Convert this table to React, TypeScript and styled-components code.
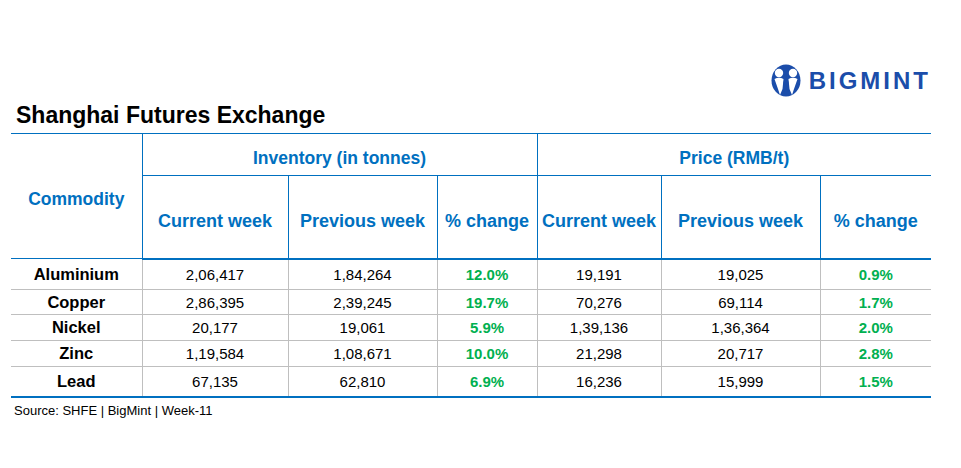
import { FC } from 'react';
import styled, { createGlobalStyle } from 'styled-components';

const BLUE = '#0070C0';
const GREEN = '#00B050';
const GREY = '#BFBFBF';

interface RowData {
  name: string;
  invCur: string;
  invPrev: string;
  invChg: string;
  priceCur: string;
  pricePrev: string;
  priceChg: string;
  h: number;
}

const rows: RowData[] = [
  { name: 'Aluminium', invCur: '2,06,417', invPrev: '1,84,264', invChg: '12.0%', priceCur: '19,191', pricePrev: '19,025', priceChg: '0.9%', h: 31 },
  { name: 'Copper', invCur: '2,86,395', invPrev: '2,39,245', invChg: '19.7%', priceCur: '70,276', pricePrev: '69,114', priceChg: '1.7%', h: 25 },
  { name: 'Nickel', invCur: '20,177', invPrev: '19,061', invChg: '5.9%', priceCur: '1,39,136', pricePrev: '1,36,364', priceChg: '2.0%', h: 26 },
  { name: 'Zinc', invCur: '1,19,584', invPrev: '1,08,671', invChg: '10.0%', priceCur: '21,298', pricePrev: '20,717', priceChg: '2.8%', h: 26 },
  { name: 'Lead', invCur: '67,135', invPrev: '62,810', invChg: '6.9%', priceCur: '16,236', pricePrev: '15,999', priceChg: '1.5%', h: 30 },
];

const colWidths = [131, 146, 149, 100, 124, 159, 111];

const BigmintLogo: FC = () => (
  <LogoWrap>
    <svg width="30" height="33" viewBox="0 0 30 33">
      <ellipse cx="15" cy="16.5" rx="14.5" ry="16" fill="#1B4DAA" />
      <circle cx="8" cy="9" r="4.2" fill="#fff" />
      <circle cx="22" cy="9" r="4.2" fill="#fff" />
      <path d="M3.5 15 Q8 12.5 12.5 15 L11.5 25 L9 31 L7 25 Z" fill="#fff" />
      <path d="M17.5 15 Q22 12.5 26.5 15 L23 25 L21 31 L18.5 25 Z" fill="#fff" />
      <path d="M12.5 17 L15 22 L17.5 17 L17 28 L15 24 L13 28 Z" fill="#1B4DAA" />
    </svg>
    <LogoText>BIGMINT</LogoText>
  </LogoWrap>
);

const App: FC = () => {
  return (
    <Page>
      <GlobalStyle />
      <TopBar>
        <BigmintLogo />
      </TopBar>
      <Title>Shanghai Futures Exchange</Title>
      <Table>
        <colgroup>
          {colWidths.map((w, i) => (
            <col key={i} style={{ width: w }} />
          ))}
        </colgroup>
        <thead>
          <HeadRow $h={42}>
            <HeadCell rowSpan={2} $right $pad={6}>
              Commodity
            </HeadCell>
            <HeadCell colSpan={3} $right $pad={8}>
              Inventory (in tonnes)
            </HeadCell>
            <HeadCell colSpan={3} $pad={8}>
              Price (RMB/t)
            </HeadCell>
          </HeadRow>
          <HeadRow $h={83}>
            <SubCell $right>Current week</SubCell>
            <SubCell $right>Previous week</SubCell>
            <SubCell $right>% change</SubCell>
            <SubCell $right>Current week</SubCell>
            <SubCell $right>Previous week</SubCell>
            <SubCell>% change</SubCell>
          </HeadRow>
        </thead>
        <tbody>
          {rows.map((r) => (
            <BodyRow key={r.name} $h={r.h}>
              <NameCell>{r.name}</NameCell>
              <Cell>{r.invCur}</Cell>
              <Cell>{r.invPrev}</Cell>
              <Cell $change>{r.invChg}</Cell>
              <Cell>{r.priceCur}</Cell>
              <Cell>{r.pricePrev}</Cell>
              <Cell $change $last>
                {r.priceChg}
              </Cell>
            </BodyRow>
          ))}
        </tbody>
      </Table>
      <Source>Source: SHFE | BigMint | Week-11</Source>
    </Page>
  );
};

export default App;

const GlobalStyle = createGlobalStyle`
  html, body {
    margin: 0;
    padding: 0;
    background: #fff;
  }
  body {
    font-family: 'Liberation Sans', Arial, sans-serif;
  }
`;

const Page = styled.div`
  width: 961px;
  height: 468px;
  background: #fff;
  overflow: hidden;
`;

const TopBar = styled.div`
  display: flex;
  justify-content: flex-end;
  padding: 63px 33px 0 0;
  height: 35px;
`;

const LogoWrap = styled.div`
  display: flex;
  align-items: center;
  gap: 8px;
  height: 35px;
`;

const LogoText = styled.span`
  font-family: 'Liberation Sans', Arial, sans-serif;
  font-weight: 700;
  font-size: 24px;
  letter-spacing: 3px;
  margin-right: -3px;
  color: #1B4DAA;
  line-height: 1;
`;

const Title = styled.h1`
  margin: 3px 0 0 16px;
  font-size: 23px;
  line-height: 28px;
  font-weight: 700;
  color: #000;
`;

const Table = styled.table`
  margin: 4px 0 0 11px;
  width: 920px;
  table-layout: fixed;
  border-collapse: collapse;
  border-top: 1px solid ${BLUE};
  border-bottom: 2px solid ${BLUE};
`;

const HeadRow = styled.tr<{ $h: number }>`
  height: ${(p) => p.$h}px;
  &:last-child th {
    border-bottom: 2px solid ${BLUE};
  }
`;

const HeadCell = styled.th<{ $right?: boolean; $pad?: number }>`
  padding: ${(p) => p.$pad ?? 0}px 0 0;
  font-size: 17.5px;
  font-weight: 700;
  color: ${BLUE};
  text-align: center;
  vertical-align: middle;
  border-bottom: 1px solid ${BLUE};
  border-right: ${(p) => (p.$right ? `1px solid ${BLUE}` : 'none')};
  white-space: nowrap;
`;

const SubCell = styled(HeadCell)`
  padding-top: 10px;
  font-size: 18px;
`;

const BodyRow = styled.tr<{ $h: number }>`
  height: ${(p) => p.$h}px;
  &:last-child td {
    border-bottom: none;
  }
`;

const Cell = styled.td<{ $change?: boolean; $last?: boolean }>`
  padding: 0;
  text-align: center;
  vertical-align: middle;
  font-size: 15px;
  font-weight: ${(p) => (p.$change ? 700 : 400)};
  color: ${(p) => (p.$change ? GREEN : '#000')};
  border-bottom: 1px solid ${GREY};
  border-right: ${(p) => (p.$last ? 'none' : `1px solid ${GREY}`)};
`;

const NameCell = styled(Cell)`
  font-size: 16.5px;
  font-weight: 700;
  color: #000;
`;

const Source = styled.div`
  margin: 5px 0 0 14px;
  font-size: 13px;
  color: #000;
`;
